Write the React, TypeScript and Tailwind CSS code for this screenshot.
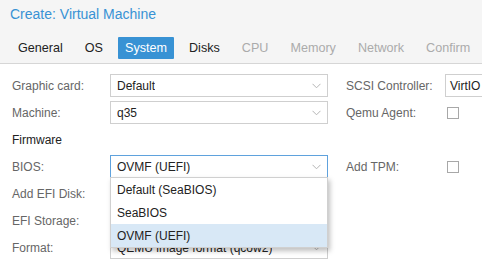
import React from "react";

const Chevron = () => (
  <svg width="9" height="6" viewBox="0 0 9 6" className="absolute right-[6px] top-1/2 -translate-y-1/2">
    <polyline points="0.5,0.8 4.5,4.8 8.5,0.8" fill="none" stroke="#b5b5b5" strokeWidth="1" />
  </svg>
);

const Select = ({ value, focused = false }: { value: string; focused?: boolean }) => (
  <div
    className={`relative h-[23px] w-[218px] border bg-white pl-[6px] flex items-center text-[12px] text-[#222] ${
      focused ? "border-[#5fa2dd]" : "border-[#cfcfcf]"
    }`}
  >
    <span className="truncate">{value}</span>
    <Chevron />
  </div>
);

const Check = () => <div className="w-[12px] h-[12px] border border-[#a8a8a8] bg-white ml-[2px]" />;

const Row = ({ children }: { children: React.ReactNode }) => (
  <div className="h-[27px] flex items-center">{children}</div>
);

const Label = ({ children, w = "w-[98px]" }: { children: React.ReactNode; w?: string }) => (
  <div className={`${w} shrink-0 text-[12px] text-[#666] whitespace-nowrap`}>{children}</div>
);

export default function App() {
  const tabs = [
    { t: "General", s: "n" },
    { t: "OS", s: "n" },
    { t: "System", s: "a" },
    { t: "Disks", s: "n" },
    { t: "CPU", s: "d" },
    { t: "Memory", s: "d" },
    { t: "Network", s: "d" },
    { t: "Confirm", s: "d" },
  ];
  return (
    <div
      className="w-[482px] h-[261px] overflow-hidden bg-white"
      style={{ fontFamily: '"Liberation Sans", Arial, sans-serif' }}
    >
      <div className="h-[64px] bg-[#f5f5f5] border-b border-[#d6d6d6]">
        <div className="pl-[10px] pt-[5px] text-[14px] text-[#3892d4] leading-[18px]">Create: Virtual Machine</div>
        <div className="flex gap-[8px] pl-[11px] mt-[14px]">
          {tabs.map((x) => (
            <div
              key={x.t}
              className={`h-[22px] px-[7px] flex items-center text-[12.6px] ${
                x.s === "a"
                  ? "bg-[#3892d4] text-white rounded-[1px]"
                  : x.s === "n"
                  ? "text-[#222]"
                  : "text-[#ababab]"
              }`}
            >
              {x.t}
            </div>
          ))}
        </div>
      </div>
      <div className="flex pt-[8px] pl-[12px]">
        <div className="w-[316px] shrink-0">
          <Row>
            <Label>Graphic card:</Label>
            <Select value="Default" />
          </Row>
          <Row>
            <Label>Machine:</Label>
            <Select value="q35" />
          </Row>
          <Row>
            <div className="text-[12px] text-[#222]">Firmware</div>
          </Row>
          <Row>
            <Label>BIOS:</Label>
            <div className="relative">
              <Select value="OVMF (UEFI)" focused />
              <div className="absolute left-0 top-[22px] z-10 w-[218px] bg-white border border-[#d0d0d0] shadow-[2px_3px_5px_rgba(0,0,0,0.25)]">
                <div className="h-[23px] pl-[6px] flex items-center text-[12px] text-[#222]">Default (SeaBIOS)</div>
                <div className="h-[23px] pl-[6px] flex items-center text-[12px] text-[#222]">SeaBIOS</div>
                <div className="h-[23px] pl-[6px] flex items-center text-[12px] text-[#222] bg-[#d8e8f6]">OVMF (UEFI)</div>
              </div>
            </div>
          </Row>
          <Row>
            <Label>Add EFI Disk:</Label>
          </Row>
          <Row>
            <Label>EFI Storage:</Label>
          </Row>
          <Row>
            <Label>Format:</Label>
            <Select value="QEMU image format (qcow2)" />
          </Row>
        </div>
        <div className="pl-[18px] flex-1 min-w-0">
          <Row>
            <Label w="w-[99px]">SCSI Controller:</Label>
            <div className="h-[23px] flex-1 min-w-0 overflow-hidden whitespace-nowrap border border-[#cfcfcf] border-r-0 pl-[4px] flex items-center text-[12px] text-[#222]">VirtIO SCSI</div>
          </Row>
          <Row>
            <Label w="w-[99px]">Qemu Agent:</Label>
            <Check />
          </Row>
          <Row>
            <span />
          </Row>
          <Row>
            <Label w="w-[99px]">Add TPM:</Label>
            <Check />
          </Row>
        </div>
      </div>
    </div>
  );
}
